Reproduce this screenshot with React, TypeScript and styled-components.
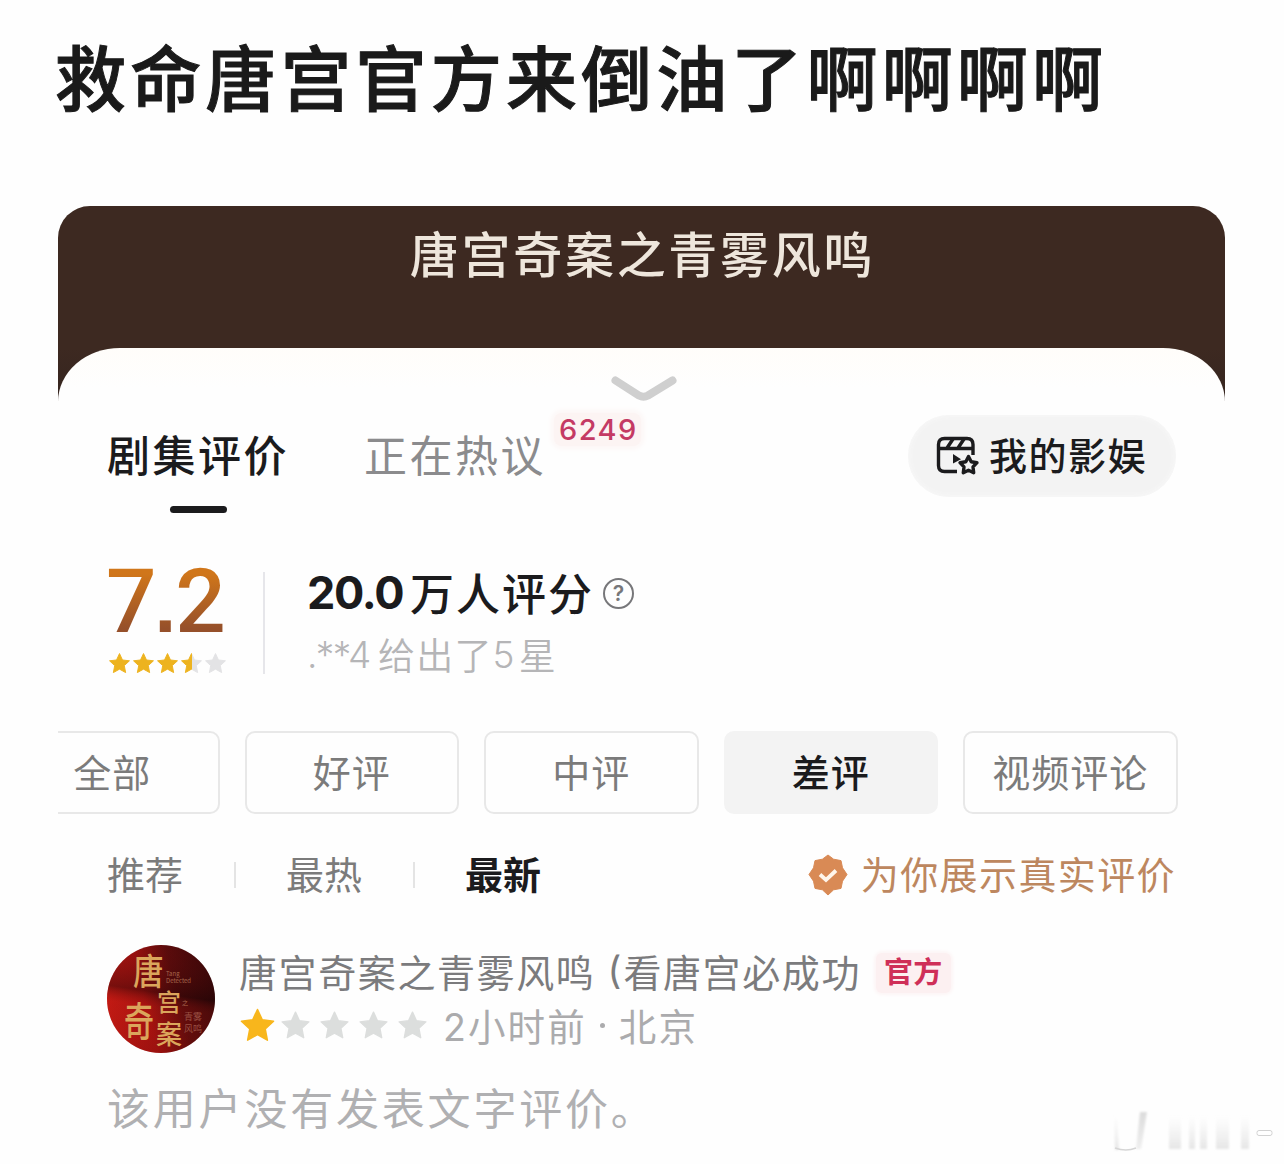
import React from "react";
import styled, { createGlobalStyle } from "styled-components";

const filters = ["全部", "好评", "中评", "差评", "视频评论"];
const STAR =
  "M12 1.6l3.1 6.7 7.3.9-5.4 5 1.4 7.3L12 17.9l-6.4 3.6L7 14.2l-5.4-5 7.3-.9z";

export default function App() {
  return (
    <Page>
      <GlobalStyle />
      <Title>救命唐宫官方来倒油了啊啊啊啊</Title>
      <Card>
        <ShowName>唐宫奇案之青雾风鸣</ShowName>
        <Sheet>
          <Handle>
            <svg width="68" height="30" viewBox="0 0 68 30" fill="none">
              <path
                d="M5.500 6.500L29 21.500Q33.500 24 38 21.500L62.500 6.500"
                stroke="#cfcfcf"
                strokeWidth="8"
                strokeLinecap="round"
              />
            </svg>
          </Handle>

          <TabBar>
            <Tab $active>
              剧集评价
              <Underline />
            </Tab>
            <Tab>
              正在热议
              <Count>6249</Count>
            </Tab>
            <MineButton>
              <MineIcon />
              <span>我的影娱</span>
            </MineButton>
          </TabBar>

          <ScoreRow>
            <ScoreBox>
              <Score>
                7<Point>.</Point>2
              </Score>
              <SmallStars>
                <Star size={23} fill="#edb31f" />
                <Star size={23} fill="#edb31f" />
                <Star size={23} fill="#edb31f" />
                <Star size={23} fill="url(#half)" />
                <Star size={23} fill="#e3e3e5" />
              </SmallStars>
            </ScoreBox>
            <Divider />
            <Voters>
              <VoterTotal>
                <b>20.0</b>
                <span>万人评分</span>
                <Help>?</Help>
              </VoterTotal>
              <LastVote>
                <Masked>.**4</Masked>给出了<Five>5</Five>星
              </LastVote>
            </Voters>
          </ScoreRow>

          <Filters>
            {filters.map((name) => (
              <Chip key={name} $active={name === "差评"}>
                {name}
              </Chip>
            ))}
          </Filters>

          <SortRow>
            <Sort>推荐</Sort>
            <Bar />
            <Sort>最热</Sort>
            <Bar />
            <Sort $active>最新</Sort>
            <Trust>
              <SealIcon />
              <span>为你展示真实评价</span>
            </Trust>
          </SortRow>

          <Review>
            <Avatar />
            <ReviewMeta>
              <NameLine>
                <span>唐宫奇案之青雾风鸣</span>
                <Paren>(</Paren>
                <span>看唐宫必成功</span>
                <Official>官方</Official>
              </NameLine>
              <RateLine>
                <Star size={37} fill="#f8b61c" />
                <GreyStars>
                  <Star size={31} fill="#dcdedd" />
                  <Star size={31} fill="#dcdedd" />
                  <Star size={31} fill="#dcdedd" />
                  <Star size={31} fill="#dcdedd" />
                </GreyStars>
                <Time>2小时前</Time>
                <Dot />
                <Time>北京</Time>
              </RateLine>
            </ReviewMeta>
          </Review>
          <Comment>该用户没有发表文字评价。</Comment>
        </Sheet>
      </Card>
      <Watermark />
    </Page>
  );
}

function Star({ size, fill }: { size: number; fill: string }) {
  return (
    <svg width={size} height={size} viewBox="0 0 24 24">
      <defs>
        <linearGradient id="half">
          <stop offset="0.52" stopColor="#edb31f" />
          <stop offset="0.52" stopColor="#e3e3e5" />
        </linearGradient>
      </defs>
      <path d={STAR} fill={fill} stroke={fill} strokeLinejoin="round" />
    </svg>
  );
}

function MineIcon() {
  return (
    <svg width="44" height="40" viewBox="0 0 44 40" fill="none">
      <g stroke="#1b1b1d" strokeWidth="3.400" strokeLinejoin="round">
        <path d="M21 35.500H8.500Q2.500 35.500 2.500 29.500V8.500Q2.500 2.500 8.500 2.500H31Q37 2.500 37 8.500V19" />
        <path d="M3 12.500H37M17 3L11 12M28 3L22 12" />
        <path d="M32.500 20.500L35.200 25.700L41 26.700L37 30.900L37.700 36.700L32.500 34.300L27.300 36.700L28 30.900L24 26.700L29.800 25.700Z" />
      </g>
      <path d="M17 18L25 23.200L17 27.500Z" fill="#1b1b1d" />
    </svg>
  );
}

function SealIcon() {
  return (
    <svg width="40" height="42" viewBox="0 0 40 42">
      <path
        d="M20 1L25.600 5.200L33 6.600L34.500 13.800L39 20.500L34.500 27.200L33 34.400L25.600 35.800L20 41L14.400 35.800L7 34.400L5.500 27.200L1 20.500L5.500 13.800L7 6.600L14.400 5.200Z"
        fill="#d98a55"
        stroke="#d98a55"
        strokeLinejoin="round"
      />
      <path d="M12 20.500L18 26L28 16.500" fill="none" stroke="#fff5ea" strokeWidth="3.800" />
    </svg>
  );
}

function Avatar() {
  return (
    <AvatarSvg viewBox="0 0 108 108">
      <defs>
        <linearGradient id="red" x1="0" y1="0.600" x2="1" y2="0.350">
          <stop offset="0" stopColor="#c01a14" />
          <stop offset="0.350" stopColor="#a01210" />
          <stop offset="0.650" stopColor="#4a0a0b" />
          <stop offset="1" stopColor="#230507" />
        </linearGradient>
        <linearGradient id="shade" x1="0.400" y1="0" x2="0.250" y2="1">
          <stop offset="0" stopColor="#a01210" stopOpacity="0.200" />
          <stop offset="0.420" stopColor="#2a0506" stopOpacity="0.450" />
          <stop offset="0.560" stopColor="#d01b12" stopOpacity="0.200" />
          <stop offset="1" stopColor="#8a0d0b" stopOpacity="0.300" />
        </linearGradient>
      </defs>
      <circle cx="54" cy="54" r="54" fill="url(#red)" />
      <circle cx="54" cy="54" r="54" fill="url(#shade)" />
      <g fill="#dba65c" fontWeight="500">
        <text transform="translate(26 40) scale(0.960 1.120)" fontSize="32">唐</text>
        <text transform="translate(50 66)" fontSize="24">宫</text>
        <text transform="translate(17 91) scale(0.880 1.180)" fontSize="34">奇</text>
        <text transform="translate(49 99)" fontSize="26">案</text>
      </g>
      <g fill="#a8664b" fontSize="6">
        <text x="59" y="31">Tang</text>
        <text x="59" y="38">Detected</text>
        <text x="75" y="60" fontSize="6">之</text>
      </g>
      <g fill="#9a5144" fontSize="9">
        <text x="77" y="75">青</text>
        <text x="86" y="75">雾</text>
        <text x="77" y="87">风</text>
        <text x="86" y="87">鸣</text>
      </g>
    </AvatarSvg>
  );
}

function Watermark() {
  return (
    <WatermarkSvg viewBox="0 0 170 50">
      <defs>
        <linearGradient id="fade" x1="0" y1="0" x2="0" y2="1">
          <stop offset="0" stopColor="#ececec" stopOpacity="0" />
          <stop offset="1" stopColor="#e6e6e6" />
        </linearGradient>
        <linearGradient id="fadeTop" x1="0" y1="0" x2="0" y2="1">
          <stop offset="0" stopColor="#dcdcdc" />
          <stop offset="1" stopColor="#efefef" />
        </linearGradient>
        <filter id="soft">
          <feGaussianBlur stdDeviation="1.300" />
        </filter>
      </defs>
      <g fill="url(#fade)" filter="url(#soft)">
        <path d="M2 8H5L7 42H3Z" />
        <path d="M28 4H35L29 41H24Z" fill="url(#fadeTop)" />
        <rect x="57" y="8" width="12" height="33" />
        <rect x="77" y="8" width="6" height="33" />
        <rect x="88" y="8" width="7" height="33" />
        <rect x="104" y="8" width="13" height="33" />
        <rect x="129" y="8" width="8" height="33" />
      </g>
      <path d="M3 40Q14 44 24 40" stroke="#d5d5d5" fill="none" strokeWidth="1.500" />
      <rect x="145" y="22.500" width="15" height="5" rx="2" fill="#fff" stroke="#d2d2d2" />
    </WatermarkSvg>
  );
}

const GlobalStyle = createGlobalStyle`
  body {
    margin: 0;
    background: #fefefe;
    font-family: Inter, "Noto Sans CJK SC", sans-serif;
    white-space: nowrap;
  }
  * {
    box-sizing: border-box;
  }
  svg {
    display: block;
    flex: none;
  }
`;

const Page = styled.div`
  position: relative;
  width: 1284px;
  height: 1164px;
  overflow: hidden;
`;

const Title = styled.h1`
  margin: 0;
  height: 206px;
  padding: 24px 0 0 55px;
  color: #1a1a1a;
  font-family: "Noto Sans CJK SC", sans-serif;
  font-size: 71px;
  font-weight: 500;
  line-height: 100px;
  letter-spacing: 4.150px;
  -webkit-text-stroke: 1px #1a1a1a;
`;

const Card = styled.div`
  width: 1167px;
  height: 958px;
  margin-left: 58px;
  border-radius: 32px 32px 0 0;
  background: linear-gradient(#3d2921 0 142px, #35251f 195px, #fefefe 195px);
  overflow: hidden;
`;

const ShowName = styled.div`
  height: 142px;
  padding: 10px 0 0 2px;
  color: #eee6dc;
  font-family: "Noto Sans CJK SC", sans-serif;
  font-size: 49px;
  font-weight: 500;
  line-height: 72px;
  letter-spacing: 2.700px;
  text-align: center;
`;

const Sheet = styled.div`
  height: 816px;
  padding: 0 49px;
  border-radius: 62px 62px 0 0 / 54px 54px 0 0;
  background: linear-gradient(#fffdfa, #fefefe 40px);
`;

const Handle = styled.div`
  display: flex;
  justify-content: center;
  height: 67px;
  padding: 26px 0 0 4px;
`;

const TabBar = styled.div`
  display: flex;
  height: 98px;
`;

const Tab = styled.div<{ $active?: boolean }>`
  position: relative;
  width: 182px;
  margin-right: 75px;
  color: ${(p) => (p.$active ? "#1b1b1d" : "#8b8b8d")};
  font-size: 43px;
  font-weight: ${(p) => (p.$active ? 500 : 400)};
  line-height: 82px;
  letter-spacing: 2.500px;
`;

const Underline = styled.div`
  width: 57px;
  height: 7px;
  margin: 9px 0 0 63px;
  border-radius: 4px;
  background: #1b1b1d;
`;

const Count = styled.span`
  position: absolute;
  left: 190px;
  top: -2px;
  padding: 0 3px 0 5px;
  border-radius: 8px;
  background: #fcf4f3;
  box-shadow: 0 0 6px 2px #fcf4f3;
  color: #c43a64;
  font-size: 29px;
  font-weight: 500;
  line-height: 33px;
  letter-spacing: 1.400px;
`;

const MineButton = styled.div`
  display: flex;
  align-items: center;
  gap: 9px;
  width: 268px;
  height: 82px;
  margin-left: auto;
  padding-left: 28px;
  border-radius: 41px;
  background: #f3f3f3;
  box-shadow: inset 0 0 6px #fafafa;
  color: #1b1b1d;
  font-size: 38px;
  font-weight: 500;
  letter-spacing: 1.500px;

  span {
    padding-bottom: 6px;
  }
`;

const ScoreRow = styled.div`
  display: flex;
  height: 218px;
  padding-top: 49px;
`;

const ScoreBox = styled.div`
  width: 156px;
`;

const Score = styled.div`
  height: 78px;
  margin-left: -1px;
  background: linear-gradient(#d0761a 15%, #96502a 85%);
  background-clip: text;
  -webkit-background-clip: text;
  color: transparent;
  font-family: Roboto, sans-serif;
  font-size: 89px;
  font-weight: 500;
  line-height: 79px;
  letter-spacing: -2px;
`;

const Point = styled.span`
  margin: 0 1px 0 0;
  font-family: "Liberation Sans", sans-serif;
  font-size: 78px;
  font-weight: 700;
  line-height: 1;
`;

const SmallStars = styled.div`
  display: flex;
  gap: 1px;
  margin: 12px 0 0 1px;
`;

const Divider = styled.div`
  width: 2px;
  height: 102px;
  margin-top: 10px;
  background: #e6e6ea;
`;

const Voters = styled.div`
  margin-left: 42px;
`;

const VoterTotal = styled.div`
  display: flex;
  align-items: center;
  height: 60px;
  color: #1b1b1d;
  font-size: 44px;
  font-weight: 500;

  b {
    width: 103px;
    font-size: 45px;
    font-weight: 700;
    letter-spacing: -1.300px;
  }
  span {
    padding-bottom: 1px;
    letter-spacing: 2px;
  }
`;

const Help = styled.i`
  width: 31px;
  height: 31px;
  margin: 3px 0 0 9px;
  border: 2px solid #77777a;
  border-radius: 50%;
  color: #77777a;
  font-size: 21px;
  font-style: normal;
  font-weight: 600;
  line-height: 27px;
  text-align: center;
`;

const LastVote = styled.div`
  display: flex;
  align-items: center;
  height: 64px;
  color: #b5b5b7;
  font-size: 37px;
  font-weight: 350;
  letter-spacing: 1.200px;
`;

const Masked = styled.span`
  width: 71px;
  letter-spacing: -1.600px;
`;

const Five = styled.span`
  margin: 0 3px 0 0;
`;

const Filters = styled.div`
  display: flex;
  gap: 25px;
  margin-left: -102px;
`;

const Chip = styled.div<{ $active?: boolean }>`
  flex: none;
  width: 214.500px;
  height: 83px;
  border: 2px solid ${(p) => (p.$active ? "#f3f3f3" : "#e8e8e8")};
  border-radius: 10px;
  background: ${(p) => (p.$active ? "#f3f3f3" : "transparent")};
  color: ${(p) => (p.$active ? "#1b1b1d" : "#7b7b7b")};
  font-size: 38px;
  font-weight: ${(p) => (p.$active ? 500 : 400)};
  line-height: 80px;
  letter-spacing: 1px;
  text-align: center;
`;

const SortRow = styled.div`
  display: flex;
  align-items: center;
  height: 122px;
`;

const Sort = styled.div<{ $active?: boolean }>`
  padding-bottom: 6px;
  color: ${(p) => (p.$active ? "#1b1b1d" : "#7b7b7b")};
  font-size: 38px;
  font-weight: ${(p) => (p.$active ? 700 : 400)};
`;

const Bar = styled.div`
  width: 2px;
  height: 26px;
  margin: 0 50px 0 51px;
  background: #e4e4e4;
`;

const Trust = styled.div`
  display: flex;
  align-items: center;
  gap: 13px;
  margin-left: auto;
  color: #bd875f;
  font-size: 38px;
  letter-spacing: 1.400px;

  span {
    padding-bottom: 6px;
  }
`;

const Review = styled.div`
  display: flex;
  gap: 24px;
  height: 130px;
  padding-top: 9px;
`;

const AvatarSvg = styled.svg`
  width: 108px;
  height: 108px;
  overflow: visible;
  font-family: "Noto Sans CJK SC", sans-serif;
`;

const ReviewMeta = styled.div``;

const NameLine = styled.div`
  display: flex;
  align-items: center;
  height: 50px;
  color: #7b7b7d;
  font-size: 38px;
  letter-spacing: 1.600px;
`;

const Paren = styled.span`
  width: 28px;
  padding-left: 12px;
`;

const Official = styled.span`
  margin: 5px 0 0 15px;
  padding: 0 8px;
  border-radius: 6px;
  background: #fcf0f1;
  box-shadow: 0 0 4px 1px #fcf0f1;
  color: #cf2f58;
  font-size: 29px;
  font-weight: 700;
  line-height: 40px;
  letter-spacing: 0.300px;
`;

const RateLine = styled.div`
  display: flex;
  align-items: center;
  height: 60px;
`;

const GreyStars = styled.div`
  display: flex;
  gap: 8px;
  margin: 0 15px 0 4px;
`;

const Time = styled.span`
  padding-bottom: 1px;
  color: #ababad;
  font-size: 37.500px;
  letter-spacing: 2.100px;
`;

const Dot = styled.i`
  width: 5px;
  height: 5px;
  margin: 0 14px 0 13px;
  border-radius: 50%;
  background: #ababad;
`;

const Comment = styled.div`
  padding-top: 8px;
  color: #b0b0b2;
  font-size: 43px;
  line-height: 70px;
  letter-spacing: 2.800px;
`;

const WatermarkSvg = styled.svg`
  position: absolute;
  left: 1112px;
  top: 1108px;
  width: 170px;
  height: 50px;
`;
